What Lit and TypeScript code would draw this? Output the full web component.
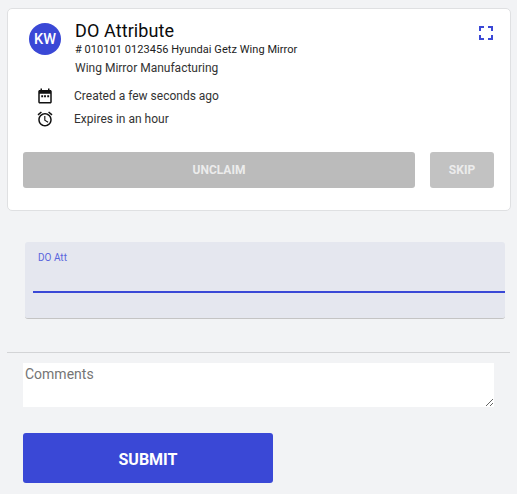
import { LitElement, html, css } from "lit";
import { customElement } from "lit/decorators.js";

@customElement("app-root")
export class AppRoot extends LitElement {
  static styles = css`
    :host {
      display: block;
      width: 517px;
      height: 494px;
      overflow: hidden;
      background: #f2f3f5;
      font-family: Roboto, "Liberation Sans", sans-serif;
      box-sizing: border-box;
      padding-top: 8px;
    }
    * { box-sizing: border-box; }
    .card {
      margin-left: 7px;
      width: 504px;
      height: 203px;
      background: #fff;
      border: 1px solid #dfe0e2;
      border-radius: 5px;
      padding: 13px 15px 0;
      position: relative;
      display: flex;
      flex-direction: column;
    }
    .head { display: flex; padding-left: 6px; gap: 14px; }
    .avatar {
      width: 32px; height: 32px; margin-top: 1px;
      border-radius: 50%;
      background: #3a48d6;
      color: #fff;
      font-size: 14.5px;
      font-weight: 500;
      display: flex; align-items: center; justify-content: center;
      flex: none;
    }
    .title { font-size: 18px; line-height: 20px; color: #0b0b0b; margin-top: -1px; letter-spacing: 0.1px; }
    .sub { font-size: 11px; line-height: 14px; margin-top: 2px; color: #222; letter-spacing: 0.05px; }
    .org { font-size: 12px; line-height: 14px; margin-top: 4px; color: #333; }
    .meta { display: flex; flex-direction: column; gap: 3px; margin-top: 11px; }
    .row { display: flex; align-items: center; height: 20px; padding-left: 13px; gap: 20px; font-size: 12px; color: #333; }
    .row svg { width: 18px; height: 18px; flex: none; display: block; }
    .expand { position: absolute; right: 17px; top: 17px; width: 14px; height: 14px; display: block; }
    .actions { display: flex; gap: 15px; margin-top: 23px; }
    .btn {
      height: 36px; border: 0; border-radius: 3px;
      background: #bbbbbb;
      color: #ececec;
      font: 700 12px Roboto, "Liberation Sans", sans-serif;
      display: flex; align-items: center; justify-content: center;
    }
    .unclaim { width: 392px; }
    .skip { width: 64px; background: #c2c2c2; }
    .field {
      margin: 31px 0 0 25px;
      width: 480px;
      height: 77px;
      background: #e5e7ef;
      border-bottom: 1px solid #c4c4c4;
      border-radius: 3px;
      padding-top: 10px;
    }
    .label { font-size: 10px; line-height: 12px; color: #5a66dd; padding-left: 13px; }
    .line { height: 2px; background: #3a48d6; margin: 27px 0 0 8px; }
    .divider { height: 1px; background: #d3d4d6; margin: 33px 7px 0 7px; }
    .comments { margin: 10px 0 0 23px; display: block; }
    textarea {
      display: block;
      width: 471px; height: 44px;
      border: 0; outline: 0; margin: 0;
      padding: 3px 2px 1px;
      background: #fff;
      font: 14px/17px Roboto, "Liberation Sans", sans-serif;
      color: #333;
    }
    textarea::placeholder { color: #757575; opacity: 1; }
    .submit {
      margin: 26px 0 0 23px;
      width: 250px; height: 50px;
      border: 0; border-radius: 3px;
      background: #3a48d6;
      color: #fff;
      font: 700 16px Roboto, "Liberation Sans", sans-serif;
      padding-top: 4px;
      display: flex; align-items: center; justify-content: center;
    }
  `;

  render() {
    return html`
      <section class="card">
        <div class="head">
          <div class="avatar">KW</div>
          <div>
            <div class="title">DO Attribute</div>
            <div class="sub"># 010101 0123456 Hyundai Getz Wing Mirror</div>
            <div class="org">Wing Mirror Manufacturing</div>
          </div>
        </div>
        <svg class="expand" viewBox="0 0 14 14" fill="none" stroke="#3a48d6" stroke-width="2">
          <path d="M1 5V1h4M9 1h4v4M13 9v4H9M5 13H1V9" />
        </svg>
        <div class="meta">
          <div class="row">
            <svg viewBox="0 0 24 24" fill="#111">
              <path d="M19 4h-1V2h-2v2H8V2H6v2H5C3.9 4 3 4.9 3 6v14c0 1.1.9 2 2 2h14c1.1 0 2-.9 2-2V6c0-1.1-.9-2-2-2zm0 16H5V9h14v11zM7 11h2.5v2.5H7zm3.75 0h2.5v2.5h-2.5zM15 11h2.5v2.5H15z" />
            </svg>
            <span>Created a few seconds ago</span>
          </div>
          <div class="row">
            <svg viewBox="0 0 24 24" fill="#111">
              <path d="M22 5.72l-4.6-3.86-1.29 1.53 4.6 3.86L22 5.72zM7.88 3.39L6.6 1.86 2 5.71l1.29 1.53 4.59-3.85zM12.5 8H11v6l4.75 2.85.75-1.23-4-2.37V8zM12 4c-4.97 0-9 4.03-9 9s4.03 9 9 9 9-4.03 9-9-4.03-9-9-9zm0 16c-3.87 0-7-3.13-7-7s3.13-7 7-7 7 3.13 7 7-3.13 7-7 7z" />
            </svg>
            <span>Expires in an hour</span>
          </div>
        </div>
        <div class="actions">
          <button class="btn unclaim">UNCLAIM</button>
          <button class="btn skip">SKIP</button>
        </div>
      </section>
      <div class="field">
        <div class="label">DO Att</div>
        <div class="line"></div>
      </div>
      <div class="divider"></div>
      <div class="comments"><textarea placeholder="Comments"></textarea></div>
      <button class="submit">SUBMIT</button>
    `;
  }
}
